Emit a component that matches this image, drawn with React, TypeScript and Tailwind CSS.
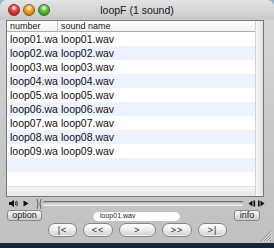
import React from "react";

const rows = ["01", "02", "03", "04", "05", "06", "07", "08", "09"];

function Light({ from, to, border }: { from: string; to: string; border: string }) {
  return (
    <div
      className="w-[12px] h-[12px] rounded-full border"
      style={{
        background: `radial-gradient(circle at 50% 30%, #ffffff 0%, ${from} 35%, ${to} 100%)`,
        borderColor: border,
      }}
    />
  );
}

function Pill({ label, w }: { label: string; w: string }) {
  return (
    <div
      className={`${w} h-[14px] rounded-full border border-[#858585] bg-gradient-to-b from-[#ffffff] via-[#ececec] to-[#cdcdcd] flex items-center justify-center text-[9px] leading-none text-[#2a2a2a] tracking-[1px] shadow-[inset_0_-1px_0_#f4f4f4]`}
    >
      {label}
    </div>
  );
}

export default function App() {
  const all = [...rows.map((r) => `loop${r}.wav`), "", ""];
  return (
    <div
      className="w-[274px] h-[248px] bg-gradient-to-b from-[#9cb4cc] to-[#14263c] overflow-hidden"
      style={{ fontFamily: '"Liberation Sans", Arial, sans-serif' }}
    >
      <div className="relative h-[243px] rounded-t-[7px] bg-gradient-to-b from-[#d8d8d8] via-[#c9c9c9] to-[#c1c1c1] flex flex-col">
        {/* title bar */}
        <div className="h-[20px] grid grid-cols-[1fr_auto_1fr] items-center rounded-t-[7px] bg-gradient-to-b from-[#e4e4e4] to-[#c8c8c8]">
          <div className="flex items-center gap-[3px] pl-[8px]">
            <Light from="#e8484a" to="#9e0f10" border="#8a2a2a" />
            <Light from="#f2a534" to="#b0620a" border="#8a5a1a" />
            <Light from="#6cc44a" to="#2d7d12" border="#3a6a2a" />
          </div>
          <div className="text-[10.5px] leading-none text-[#1a1a1a]">loopF (1 sound)</div>
          <div />
        </div>

        {/* list */}
        <div className="pl-[6px] pr-[10px]">
          <div className="h-[177px] border border-[#7a7a7a] bg-white flex">
            <div className="w-[248px] flex flex-col">
              <div className="h-[11px] border-b border-[#b0b0b0] flex bg-gradient-to-b from-[#ffffff] to-[#f0f0f0] text-[9px] leading-[10px] text-[#222]">
                <div className="w-[51px] border-r border-[#c8c8c8] pl-[3px]">number</div>
                <div className="pl-[3px]">sound name</div>
              </div>
              {all.map((name, i) => (
                <div
                  key={i}
                  className={`h-[14px] flex text-[10.5px] leading-[14px] text-[#111] ${i % 2 === 1 ? "bg-[#edf3fe]" : "bg-white"}`}
                >
                  <div className="w-[51px] pl-[3px] overflow-hidden whitespace-nowrap">{name}</div>
                  <div className="pl-[3px] whitespace-nowrap">{name}</div>
                </div>
              ))}
              <div className="flex-1 border-t border-[#e0e0e0] bg-gradient-to-b from-[#f6f6f6] to-[#e6e6e6]" />
            </div>
            <div className="flex-1 border-l border-[#d4d4d4] bg-gradient-to-r from-[#f8f8f8] via-[#eeeeee] to-[#e0e0e0]" />
          </div>
        </div>

        {/* slider row */}
        <div className="h-[13px] flex items-center pl-[9px] pr-[9px]">
          <svg width="9" height="7" viewBox="0 0 9 7" className="mr-[4px]">
            <rect x="0" y="2" width="2" height="3" fill="#111" />
            <polygon points="2,2 5,0 5,7 2,5" fill="#111" />
            <path d="M6.3 1.8 Q7.5 3.5 6.3 5.2" stroke="#111" strokeWidth="0.9" fill="none" />
            <path d="M7.6 0.8 Q9.2 3.5 7.6 6.2" stroke="#111" strokeWidth="0.9" fill="none" />
          </svg>
          <svg width="6" height="7" viewBox="0 0 6 7" className="ml-[1px]">
            <polygon points="0.5,0.5 5.5,3.5 0.5,6.5" fill="#111" />
          </svg>
          <svg width="6" height="10" viewBox="0 0 6 10" className="ml-[7px]">
            <path d="M1 0 Q3 5 1 10" stroke="#666" strokeWidth="1" fill="none" />
            <path d="M5 0 Q3 5 5 10" stroke="#666" strokeWidth="1" fill="none" />
          </svg>
          <div className="flex-1 h-[5px] rounded-[2px] border-t border-[#6c6c6c] border-b border-b-[#f2f2f2] bg-gradient-to-b from-[#b4b4b4] to-[#e4e4e4] ml-[1px] mr-[5px]" />
          <svg width="17" height="7" viewBox="0 0 17 7">
            <polygon points="0.5,3.5 4.5,0.5 4.5,6.5" fill="#111" />
            <rect x="5.5" y="0.5" width="1.6" height="6" fill="#111" />
            <rect x="10" y="0.5" width="1.6" height="6" fill="#111" />
            <polygon points="12.5,0.5 16.5,3.5 12.5,6.5" fill="#111" />
          </svg>
        </div>

        {/* buttons row */}
        <div className="h-[11px] flex items-center">
          <div className="ml-[7px] w-[35px] h-[11px] rounded-[3px] border border-[#8a8a8a] bg-gradient-to-b from-[#f8f8f8] to-[#cacaca] flex items-center justify-center text-[9px] leading-none text-[#222]">
            option
          </div>
          <div className="ml-[51px] w-[87px] h-[10px] rounded-full bg-white shadow-[inset_0_1px_1px_#b8b8b8] flex items-center pl-[7px] text-[7px] leading-none text-[#222]">
            loop01.wav
          </div>
          <div className="ml-[54px] w-[26px] h-[11px] rounded-[3px] border border-[#8a8a8a] bg-gradient-to-b from-[#f8f8f8] to-[#cacaca] flex items-center justify-center text-[9px] leading-none text-[#222]">
            info
          </div>
        </div>

        {/* transport */}
        <div className="mt-[2px] flex items-center gap-[6px] pl-[48px]">
          <Pill label="|<" w="w-[29px]" />
          <Pill label="<<" w="w-[30px]" />
          <Pill label=">" w="w-[37px]" />
          <Pill label=">>" w="w-[30px]" />
          <Pill label=">|" w="w-[29px]" />
        </div>

        {/* resize grip */}
        <svg width="12" height="12" viewBox="0 0 12 12" className="absolute right-[2px] bottom-[1px]">
          <path d="M11 1 L1 11 M11 4 L4 11 M11 7 L7 11 M11 10 L10 11" stroke="#888" strokeWidth="0.8" />
          <path d="M11.8 1.8 L1.8 11.8 M11.8 4.8 L4.8 11.8 M11.8 7.8 L7.8 11.8" stroke="#f2f2f2" strokeWidth="0.6" />
        </svg>
      </div>
    </div>
  );
}
